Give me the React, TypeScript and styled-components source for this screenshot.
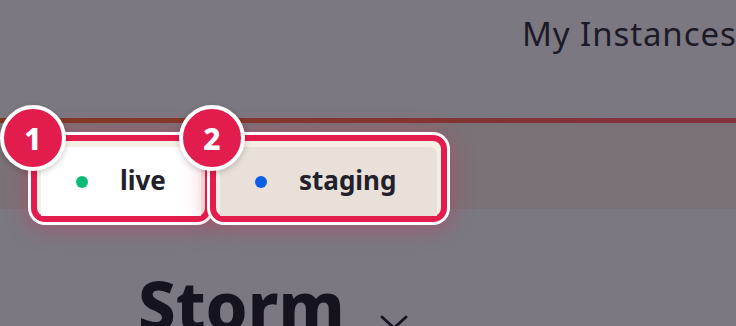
import React from 'react';
import styled, { createGlobalStyle } from 'styled-components';

const GlobalStyle = createGlobalStyle`
  html, body {
    margin: 0;
    padding: 0;
    background: #7b7882;
  }
  body {
    width: 736px;
    height: 326px;
    overflow: hidden;
    font-family: 'Noto Sans', Lato, sans-serif;
  }
`;

const tabs = [
  { id: 1, label: 'live', dot: '#0dbb78', fill: '#ffffff', width: 180 },
  { id: 2, label: 'staging', dot: '#0b5ee8', fill: '#e9e0da', width: 237 },
];

export default function App() {
  return (
    <>
      <GlobalStyle />
      <Page>
        <Header>
          <NavLink>My Instances</NavLink>
        </Header>
        <Band>
          <TabRow>
            {tabs.map((t) => (
              <Highlight key={t.id} $width={t.width}>
                <Badge>{t.id}</Badge>
                <Tab $fill={t.fill}>
                  <Dot $color={t.dot} />
                  <TabLabel>{t.label}</TabLabel>
                </Tab>
              </Highlight>
            ))}
          </TabRow>
        </Band>
        <TitleRow>
          <Title>Storm</Title>
          <Chevron viewBox="0 0 28 16">
            <path d="M2 2 L14 13 L26 2" fill="none" stroke="#16141f" strokeWidth="2.8" strokeLinecap="round" />
          </Chevron>
        </TitleRow>
      </Page>
    </>
  );
}

const Page = styled.div`
  width: 736px;
  height: 326px;
  overflow: hidden;
  display: flex;
  flex-direction: column;
`;

const Header = styled.header`
  flex-shrink: 0;
  height: 118px;
  box-sizing: border-box;
  padding: 11px 0 0 522px;
  white-space: nowrap;
  overflow: hidden;
`;

const NavLink = styled.span`
  font-family: 'Noto Sans', Lato, sans-serif;
  font-size: 33px;
  font-weight: 400;
  color: #1b1a26;
  letter-spacing: 0.9px;
`;

const Band = styled.div`
  flex-shrink: 0;
  height: 86px;
  background: #7a7277;
  border-top: 5px solid transparent;
  border-image: linear-gradient(90deg, #7e3a22, #80362e 50%, #853040) 1;
  position: relative;
  z-index: 1;
`;

const TabRow = styled.div`
  display: flex;
  padding: 12px 0 0 31px;
`;

const Highlight = styled.div<{ $width: number }>`
  position: relative;
  box-sizing: border-box;
  width: ${(p) => p.$width}px;
  height: 87px;
  margin-right: -1px;
  border: 6px solid #e31c4e;
  border-radius: 14px;
  background: #f6efe6;
  padding: 6px 4px 0 4px;
  box-shadow: 0 0 0 3px #ffffff, 0 2px 22px 4px rgba(227, 28, 78, 0.35);
`;

const Badge = styled.div`
  position: absolute;
  top: -36px;
  left: -37px;
  width: 58px;
  height: 58px;
  border-radius: 50%;
  background: #e31c4e;
  border: 4px solid #ffffff;
  box-shadow: 0 2px 6px rgba(0, 0, 0, 0.2);
  color: #ffffff;
  font-family: 'Noto Sans', Lato, sans-serif;
  font-weight: 800;
  font-size: 30px;
  display: flex;
  align-items: center;
  justify-content: center;
  z-index: 2;
`;

const Tab = styled.div<{ $fill: string }>`
  height: 100%;
  background: ${(p) => p.$fill};
  border-radius: 8px 8px 0 0;
  display: flex;
  align-items: center;
  padding-left: 35px;
  gap: 32px;
  box-sizing: border-box;
`;

const Dot = styled.span<{ $color: string }>`
  width: 12px;
  height: 12px;
  border-radius: 50%;
  background: ${(p) => p.$color};
  flex-shrink: 0;
`;

const TabLabel = styled.span`
  font-family: 'Noto Sans', Lato, sans-serif;
  font-weight: 700;
  font-size: 26px;
  color: #22202b;
  margin-top: -4px;
`;

const TitleRow = styled.div`
  flex-shrink: 0;
  display: flex;
  align-items: flex-start;
  padding: 63px 0 0 138px;
  gap: 35px;
`;

const Title = styled.h1`
  margin: 0;
  font-family: 'Noto Sans', Lato, sans-serif;
  font-weight: 800;
  font-size: 67px;
  line-height: 1;
  color: #15131e;
`;

const Chevron = styled.svg`
  width: 28px;
  height: 16px;
  margin-top: 43px;
`;
